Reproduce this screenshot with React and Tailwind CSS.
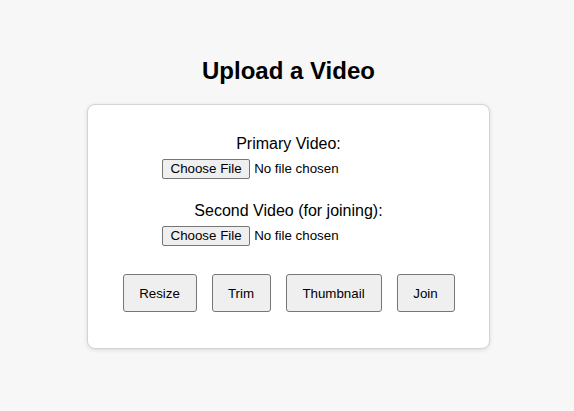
export default function App() {
  const btn =
    "bg-[#efefef] border border-[#767676] rounded-[3px] h-[38px] text-[13.333px] text-black leading-none pt-px";
  const file =
    "text-[13.333px] leading-[18px] text-black file:h-[20px] file:bg-[#efefef] file:border file:border-[#767676] file:rounded-[2px] file:px-[7.5px] file:py-0 file:mr-[4px] file:text-black";
  return (
    <div
      className="min-h-[411px] bg-[#f7f7f7] flex flex-col items-center pl-[3px] pt-[57px]"
      style={{ fontFamily: '"Liberation Sans", Arial, sans-serif' }}
    >
      <h2 className="text-[24px] font-bold leading-[28px] text-black">Upload a Video</h2>
      <div className="mt-[19px] w-[403px] bg-white rounded-[8px] border border-[#d4d4d4] shadow-[0_1px_4px_rgba(0,0,0,0.12)] px-[30px] pt-[30px] pb-[36px] text-center">
        <div className="mb-[23px]">
          <label className="block text-[16px] leading-[18px] mb-[6px] text-black">Primary Video:</label>
          <div className="flex justify-center">
            <input type="file" className={file} />
          </div>
        </div>
        <div className="mb-[28px]">
          <label className="block text-[16px] leading-[18px] mb-[6px] text-black">Second Video (for joining):</label>
          <div className="flex justify-center">
            <input type="file" className={file} />
          </div>
        </div>
        <div className="flex justify-center gap-[15px]">
          <button className={`${btn} w-[74px]`}>Resize</button>
          <button className={`${btn} w-[59px]`}>Trim</button>
          <button className={`${btn} w-[96px]`}>Thumbnail</button>
          <button className={`${btn} w-[58px]`}>Join</button>
        </div>
      </div>
    </div>
  );
}
